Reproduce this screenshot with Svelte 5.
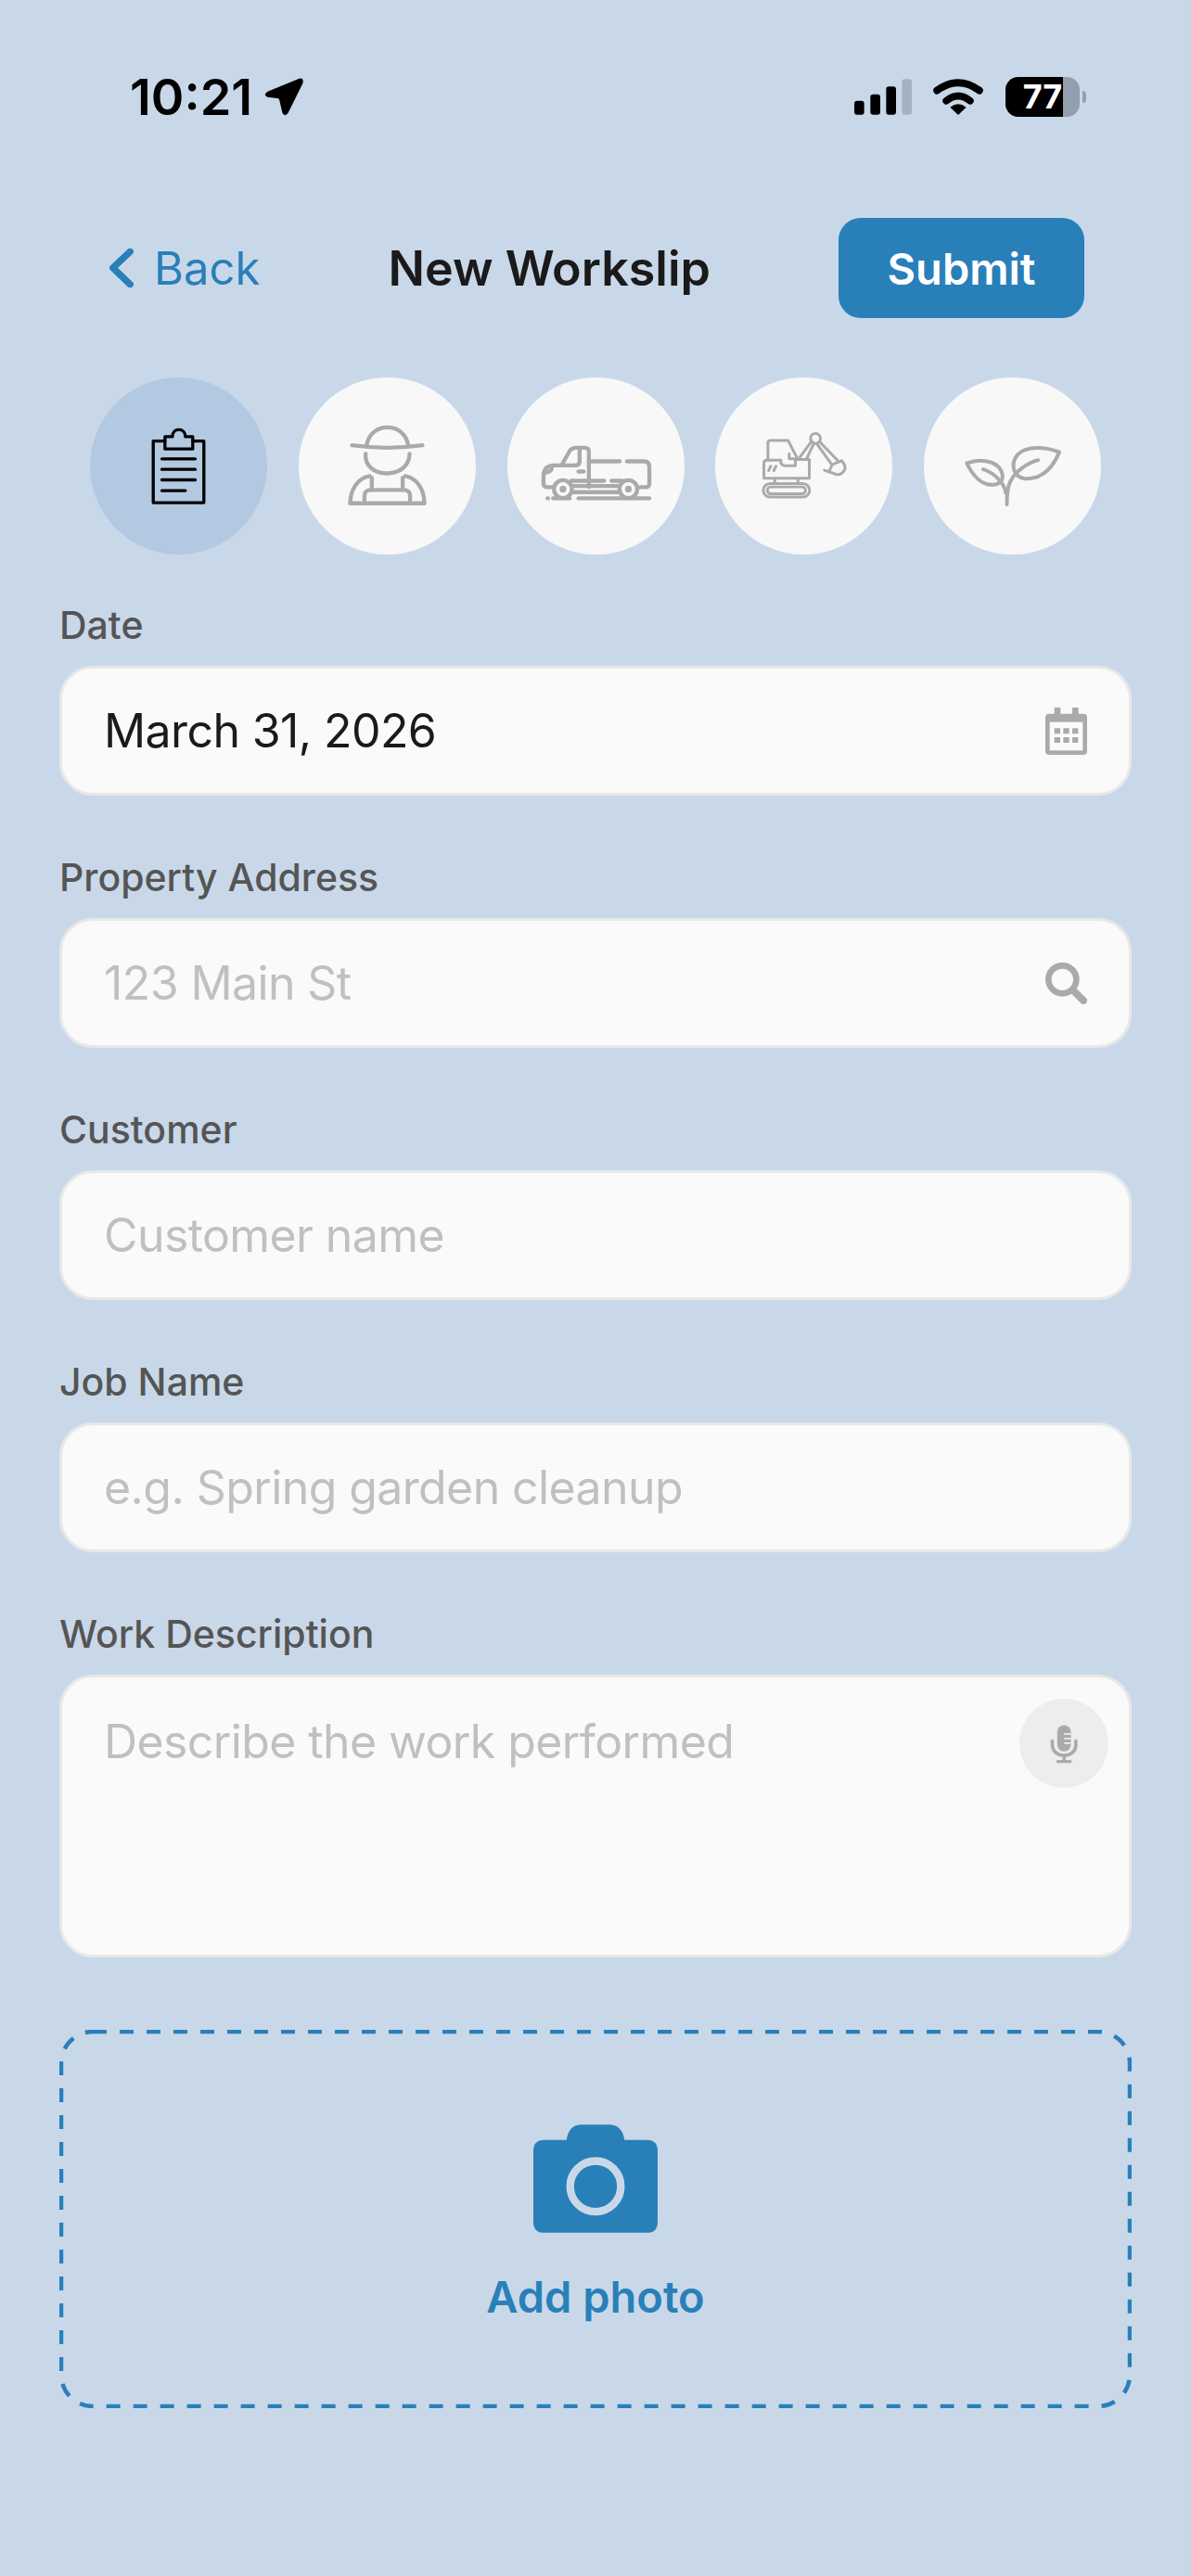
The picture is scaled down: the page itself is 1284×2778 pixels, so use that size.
<script>
  const fields = [
    { label: 'Date', value: 'March 31, 2026', icon: 'calendar' },
    { label: 'Property Address', placeholder: '123 Main St', icon: 'search' },
    { label: 'Customer', placeholder: 'Customer name' },
    { label: 'Job Name', placeholder: 'e.g. Spring garden cleanup' }
  ];
</script>

<main class="page">
  <div class="status">
    <div class="time-group">
      <span class="time">10:21</span>
      <svg class="arrow" viewBox="550 95 140 135">
        <path d="M668 103Q684 100 680 118L632 215Q622 228 614 215L604 172Q603 168 598 167L566 163Q550 155 566 145Z" fill="#000" />
      </svg>
    </div>
    <div class="status-right">
      <svg class="signal" viewBox="123 102 186 116">
        <rect x="123" y="173" width="32" height="45" rx="9" fill="#000" />
        <rect x="175" y="152" width="32" height="66" rx="9" fill="#000" />
        <rect x="226" y="126" width="32" height="92" rx="9" fill="#000" />
        <rect x="277" y="102" width="32" height="116" rx="9" fill="#a4b1c2" />
      </svg>
      <svg class="wifi" viewBox="378 100 162 118">
        <path d="M390 138Q459 88 528 138" fill="none" stroke="#000" stroke-width="24" stroke-linecap="round" />
        <path d="M420 172Q459 140 498 172" fill="none" stroke="#000" stroke-width="23" stroke-linecap="round" />
        <path d="M459 218L433 193Q459 172 485 193Z" fill="#000" />
      </svg>
      <div class="battery-wrap">
        <div class="battery">
          <div class="battery-fill"></div>
          <span class="battery-text">77</span>
        </div>
        <div class="battery-tip"></div>
      </div>
    </div>
  </div>

  <header class="nav">
    <div class="back">
      <svg class="chevron" viewBox="85 145 77 125">
        <path d="M151 155L96 207L151 260" fill="none" stroke="#2980b9" stroke-width="22" stroke-linecap="round" stroke-linejoin="round" />
      </svg>
      <span>Back</span>
    </div>
    <h1>New Workslip</h1>
    <button class="submit">Submit</button>
  </header>

  <div class="steps">
    <div class="step active">
      <svg viewBox="21 560 574 574" fill="none" stroke="#000" stroke-width="10" stroke-linecap="round" stroke-linejoin="round">
        <path d="M264 766H226V966H390V766H354" />
        <path d="M264 792V752H288C288 722 330 722 330 752H354V792Z" />
        <path d="M254 824H362M254 858H362M254 892H362M254 927H330" />
      </svg>
    </div>
    <div class="step">
      <svg viewBox="695 560 574 574" fill="none" stroke="#aaa" stroke-width="13" stroke-linecap="round" stroke-linejoin="round">
        <path d="M868 780Q982 796 1096 780" />
        <path d="M915 782C925 702 1040 702 1050 782" />
        <path d="M912 808C905 892 1055 892 1054 808" />
        <path d="M862 968C862 920 890 885 925 880M1102 968C1102 920 1075 885 1040 880" />
        <path d="M862 968H1102" />
        <path d="M932 885V925M1032 885V925" />
        <path d="M908 968V945Q908 925 930 925H1034Q1056 925 1056 945V968" />
      </svg>
    </div>
    <div class="step">
      <svg viewBox="48 560 574 574" fill="none" stroke="#aaa" stroke-width="13" stroke-linecap="round" stroke-linejoin="round">
        <path d="M225 842L250 798Q258 788 270 788H300Q312 788 312 800V915" />
        <path d="M225 845H270Q282 845 282 832V792" />
        <path d="M225 845H195Q165 848 165 880V905Q165 916 180 916H196" />
        <path d="M170 868Q190 868 192 852" />
        <path d="M278 865H295" />
        <path d="M312 832H412M435 832H490Q508 832 508 850V905Q508 916 495 916H478" />
        <path d="M255 895H362M385 895H420" />
        <path d="M262 912H408M262 932H408" />
        <circle cx="228" cy="922" r="29" />
        <circle cx="440" cy="922" r="29" />
        <circle cx="228" cy="922" r="11" fill="#aaa" stroke="none" />
        <circle cx="440" cy="922" r="11" fill="#aaa" stroke="none" />
        <path d="M178 952H180M196 952H250M278 952H508" />
      </svg>
    </div>
    <div class="step">
      <svg viewBox="32 20 574 574" fill="none" stroke="#aaa" stroke-width="9" stroke-linecap="round" stroke-linejoin="round">
        <path d="M203 288V232Q203 224 212 224H268L298 282" />
        <path d="M190 347V298Q190 288 200 288H245V298Q250 306 258 306H292V286H337V347Z" />
        <path d="M205 322L212 308M222 322L229 308" />
        <rect x="188" y="364" width="150" height="44" rx="22" />
        <rect x="201" y="375" width="124" height="22" rx="11" />
        <path d="M225 348V362M300 348V362" />
        <path d="M304 282L345 226M327 286L352 234" />
        <circle cx="357" cy="218" r="16" />
        <path d="M370 228L428 288M362 236L408 300" />
        <path d="M386 321L424 334Q442 338 452 318Q456 306 442 290L412 302L400 326" />
        <path d="M272 268V284H292" />
      </svg>
    </div>
    <div class="step">
      <svg viewBox="706 20 574 574" fill="none" stroke="#aaa" stroke-width="12" stroke-linecap="round" stroke-linejoin="round">
        <path d="M845 298C880 285 935 285 955 320C968 345 960 365 930 368C895 370 865 340 845 298Z" />
        <path d="M898 318C925 325 965 355 972 395" />
        <path d="M1145 262C1100 245 1040 240 1010 270C985 300 995 345 1035 348C1090 350 1125 310 1145 262Z" />
        <path d="M1076 288C1040 298 1000 325 985 360C978 375 975 390 975 432" />
      </svg>
    </div>
  </div>

  <form class="form">
    {#each fields as field}
      <div class="group">
        <div class="label">{field.label}</div>
        <div class="input">
          {#if field.value}
            <span class="value">{field.value}</span>
          {:else}
            <span class="placeholder">{field.placeholder}</span>
          {/if}
          {#if field.icon === 'calendar'}
            <svg class="calendar" viewBox="262 185 135 153">
              <rect x="262" y="205" width="135" height="133" rx="12" fill="#aaa" />
              <rect x="291" y="185" width="20" height="30" rx="3" fill="#aaa" />
              <rect x="349" y="185" width="20" height="30" rx="3" fill="#aaa" />
              <rect x="276" y="232" width="107" height="92" fill="#fafafa" />
              <g fill="#aaa">
                <rect x="291" y="252" width="19" height="18" rx="2" />
                <rect x="320" y="252" width="19" height="18" rx="2" />
                <rect x="349" y="252" width="19" height="18" rx="2" />
                <rect x="291" y="281" width="19" height="18" rx="2" />
                <rect x="320" y="281" width="19" height="18" rx="2" />
                <rect x="349" y="281" width="19" height="18" rx="2" />
              </g>
            </svg>
          {:else if field.icon === 'search'}
            <svg class="search" viewBox="262 1010 135 135" fill="none" stroke="#aaa">
              <circle cx="317" cy="1065" r="45" stroke-width="20" />
              <path d="M358 1106L385 1133" stroke-width="24" stroke-linecap="round" />
            </svg>
          {/if}
        </div>
      </div>
    {/each}

    <div class="group">
      <div class="label">Work Description</div>
      <div class="input textarea">
        <span class="placeholder">Describe the work performed</span>
        <div class="mic">
          <svg viewBox="178 155 287 287">
            <rect x="300" y="240" width="44" height="85" rx="22" fill="#aaa" />
            <path d="M322 268H344M322 283H344M322 298H344" stroke="#ededed" stroke-width="5" />
            <path d="M284 291V302C284 350 360 350 360 302V291" fill="none" stroke="#aaa" stroke-width="11" stroke-linecap="round" />
            <path d="M322 340V356M298 357H346" stroke="#aaa" stroke-width="10" />
          </svg>
        </div>
      </div>
    </div>

    <div class="photo">
      <svg class="dashes" viewBox="0 0 1156 408">
        <rect x="2" y="2" width="1152" height="404" rx="34" fill="none" stroke="#2980b9" stroke-width="4.5" stroke-dasharray="15 14" />
      </svg>
      <svg class="camera" viewBox="285 90 402 350">
        <path d="M320 140H392Q400 90 440 90H530Q572 90 580 140H652Q687 140 687 175V405Q687 440 652 440H320Q285 440 285 405V175Q285 140 320 140Z" fill="#2980b9" />
        <circle cx="486" cy="290" r="82" fill="none" stroke="#c9d8e9" stroke-width="25" />
      </svg>
      <span>Add photo</span>
    </div>
  </form>
</main>

<style>
  :global(body) {
    background: #c9d8e9;
  }

  .page {
    width: 1284px;
    height: 2778px;
    box-sizing: border-box;
    padding-top: 60px;
    font-family: Inter, "Liberation Sans", sans-serif;
    color: #1a1a1a;
    background: #c9d8e9;
    overflow: hidden;
  }

  .status {
    display: flex;
    align-items: center;
    justify-content: space-between;
    height: 88px;
    padding: 0 113px 0 140px;
  }

  .time-group {
    display: flex;
    align-items: center;
    gap: 11px;
  }

  .time {
    font-size: 54px;
    font-weight: 600;
    color: #000;
  }

  .arrow {
    width: 47px;
    height: 45px;
  }

  .status-right {
    display: flex;
    align-items: center;
  }

  .signal {
    width: 62px;
    height: 39px;
    margin-right: 23px;
  }

  .wifi {
    width: 54px;
    height: 39px;
    margin-right: 24px;
  }

  .battery-wrap {
    display: flex;
    align-items: center;
    gap: 3px;
  }

  .battery {
    position: relative;
    width: 80px;
    height: 43px;
    border-radius: 14px;
    background: #939eaf;
    overflow: hidden;
  }

  .battery-fill {
    width: 77%;
    height: 100%;
    background: #000;
  }

  .battery-text {
    position: absolute;
    inset: 0;
    display: flex;
    align-items: center;
    justify-content: center;
    font-size: 36px;
    font-weight: 700;
    color: #fff;
  }

  .battery-tip {
    width: 4px;
    height: 13px;
    border-radius: 0 6px 6px 0;
    background: #939eaf;
  }

  .nav {
    display: flex;
    align-items: center;
    justify-content: space-between;
    margin-top: 87px;
    padding: 0 115px 0 118px;
  }

  .back {
    display: flex;
    align-items: center;
    gap: 22px;
    font-size: 49px;
    color: #2980b9;
  }

  .chevron {
    width: 26px;
    height: 42px;
  }

  h1 {
    margin: 0;
    font-size: 52px;
    font-weight: 600;
  }

  .submit {
    width: 265px;
    height: 108px;
    border: 0;
    border-radius: 24px;
    background: #2980b9;
    color: #fff;
    font-family: inherit;
    font-size: 47px;
    font-weight: 600;
  }

  .steps {
    display: flex;
    justify-content: space-between;
    margin-top: 64px;
    padding: 0 97px;
  }

  .step {
    width: 191px;
    height: 191px;
    border-radius: 50%;
    background: #f8f8f8;
  }

  .step.active {
    background: #b3c9e1;
  }

  .step svg {
    display: block;
    width: 191px;
    height: 191px;
  }

  .form {
    margin-top: 52px;
    padding: 0 64px;
  }

  .group {
    margin-bottom: 64px;
  }

  .label {
    height: 48px;
    margin-bottom: 20px;
    font-size: 41px;
    font-weight: 500;
    line-height: 48px;
    color: #555;
  }

  .input {
    position: relative;
    display: flex;
    align-items: center;
    justify-content: space-between;
    box-sizing: border-box;
    height: 140px;
    padding: 0 45px;
    border: 3px solid #e8e8e8;
    border-radius: 36px;
    background: #fafafa;
    font-size: 50px;
    letter-spacing: -0.6px;
  }

  .value {
    color: #1a1a1a;
  }

  .placeholder {
    color: #c0c0c0;
  }

  .calendar {
    width: 45px;
    height: 51px;
  }

  .search {
    width: 45px;
    height: 45px;
  }

  .textarea {
    align-items: flex-start;
    height: 305px;
    padding-top: 39px;
  }

  .mic {
    position: absolute;
    top: 23px;
    right: 22px;
    width: 96px;
    height: 96px;
    border-radius: 50%;
    background: #ededed;
  }

  .mic svg {
    display: block;
    width: 96px;
    height: 96px;
  }

  .photo {
    position: relative;
    display: flex;
    flex-direction: column;
    align-items: center;
    box-sizing: border-box;
    height: 408px;
    margin-top: 78px;
    padding-top: 102px;
    font-size: 47px;
    font-weight: 600;
    color: #2980b9;
  }

  .dashes {
    position: absolute;
    inset: 0;
    width: 100%;
    height: 100%;
  }

  .camera {
    width: 134px;
    height: 117px;
    margin-bottom: 40px;
  }
</style>
